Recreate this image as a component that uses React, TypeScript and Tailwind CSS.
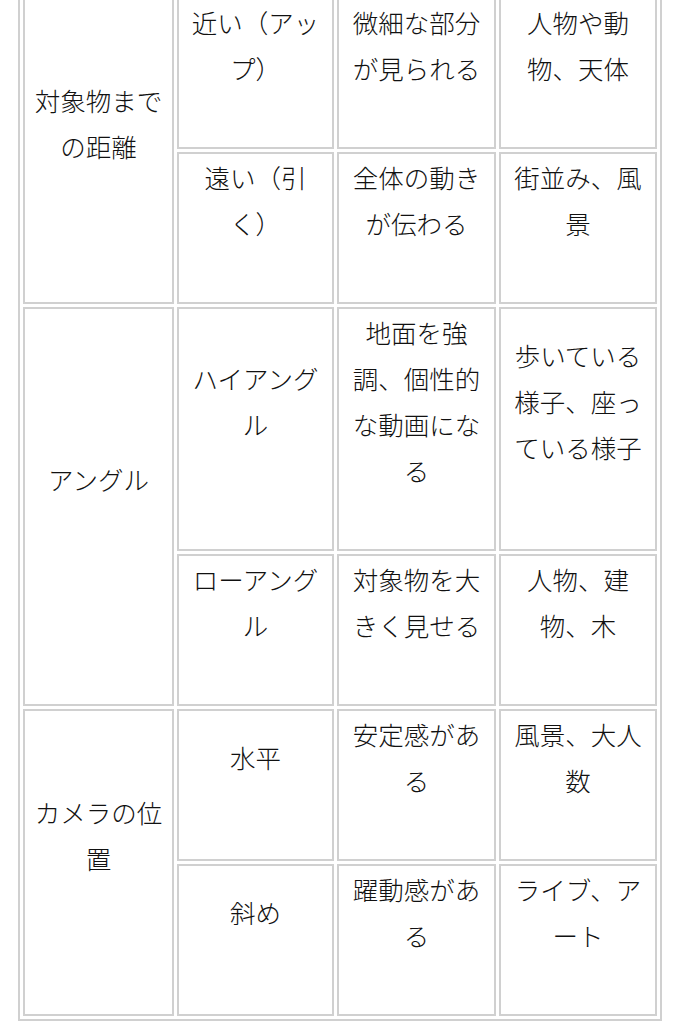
import React from "react";

type Cell = { lines: string[]; rowSpan?: number };

const rows: Cell[][] = [
  [
    { lines: ["対象物まで", "の距離"], rowSpan: 2 },
    { lines: ["近い（アッ", "プ）"] },
    { lines: ["微細な部分", "が見られる"] },
    { lines: ["人物や動", "物、天体"] },
  ],
  [
    { lines: ["遠い（引", "く）"] },
    { lines: ["全体の動き", "が伝わる"] },
    { lines: ["街並み、風", "景"] },
  ],
  [
    { lines: ["アングル"], rowSpan: 2 },
    { lines: ["ハイアング", "ル"] },
    { lines: ["地面を強", "調、個性的", "な動画にな", "る"] },
    { lines: ["歩いている", "様子、座っ", "ている様子"] },
  ],
  [
    { lines: ["ローアング", "ル"] },
    { lines: ["対象物を大", "きく見せる"] },
    { lines: ["人物、建", "物、木"] },
  ],
  [
    { lines: ["カメラの位", "置"], rowSpan: 2 },
    { lines: ["水平"] },
    { lines: ["安定感があ", "る"] },
    { lines: ["風景、大人", "数"] },
  ],
  [
    { lines: ["斜め"] },
    { lines: ["躍動感があ", "る"] },
    { lines: ["ライブ、ア", "ート"] },
  ],
];

export default function App() {
  return (
    <div
      className="bg-white min-h-[1024px] overflow-hidden text-[#111111]"
      style={{ fontFamily: '"Noto Sans CJK JP", "Noto Sans", sans-serif' }}
    >
      <table className="ml-[18px] -mt-[8px] w-[644px] table-fixed border-separate border-spacing-[3px] border-2 border-[#d0d0d0]">
        <colgroup>
          <col className="w-[151px]" />
          <col className="w-[157px]" />
          <col className="w-[159px]" />
          <col className="w-[158px]" />
        </colgroup>
        <tbody>
          {rows.map((row, ri) => (
            <tr key={ri}>
              {row.map((cell, ci) => (
                <td
                  key={ci}
                  rowSpan={cell.rowSpan}
                  className="border-2 border-[#d0d0d0] align-middle text-center px-1 pt-0 pb-[56px] text-[25.5px] font-light leading-[46px] whitespace-nowrap"
                >
                  {cell.lines.map((l, li) => (
                    <React.Fragment key={li}>
                      {li > 0 && <br />}
                      {l}
                    </React.Fragment>
                  ))}
                </td>
              ))}
            </tr>
          ))}
        </tbody>
      </table>
    </div>
  );
}
